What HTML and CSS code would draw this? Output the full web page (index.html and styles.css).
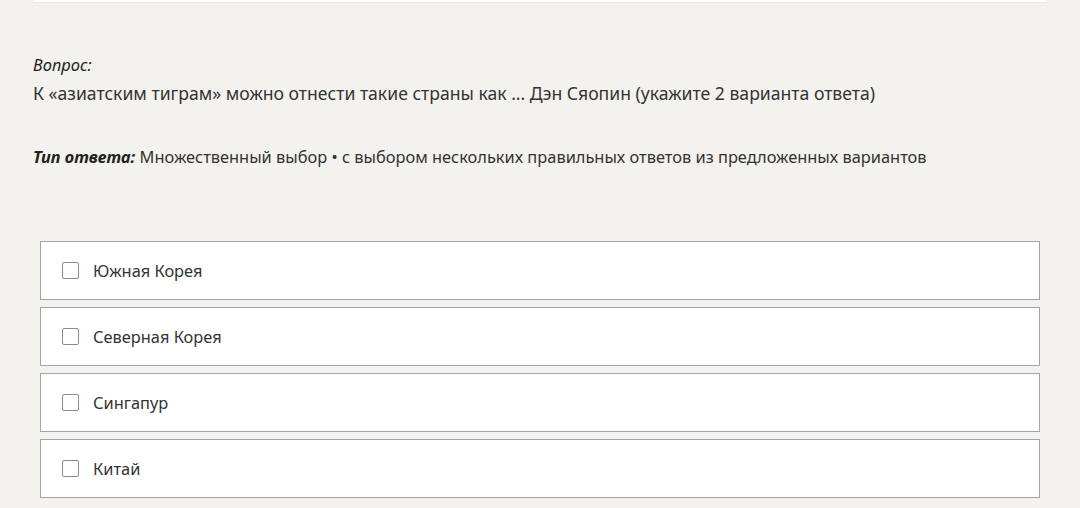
FILE: index.html
```html
<!DOCTYPE html>
<html lang="ru">
<head>
<meta charset="UTF-8" />
<meta name="viewport" content="width=device-width, initial-scale=1" />
<title>Вопрос</title>
<link rel="stylesheet" href="styles.css">
</head>
<body>

<div class="page">
  <div class="top-card"></div>

  <div class="question">
    <div class="label">Вопрос:</div>
    <div class="text">К «азиатским тиграм» можно отнести такие страны как ... Дэн Сяопин (укажите 2 варианта ответа)</div>
  </div>

  <div class="answer-type">
    <span class="label-bold">Тип ответа:</span> Множественный выбор • с выбором нескольких правильных ответов из предложенных вариантов
  </div>

  <div class="options">
    <label class="option"><span class="box"></span>Южная Корея</label>
    <label class="option"><span class="box"></span>Северная Корея</label>
    <label class="option"><span class="box"></span>Сингапур</label>
    <label class="option"><span class="box"></span>Китай</label>
  </div>
</div>

</body>
</html>
```

FILE: styles.css
```css
* {
  margin: 0; padding: 0; box-sizing: border-box;
}
body {
  background: #f3f2ee;
  color: #333;
  font-family: 'Noto Sans', 'Open Sans', sans-serif;
}
.page {
  padding: 0 33px;
}
.top-card {
  height: 3px;
  background: #fff;
  border-bottom: 1px solid #ecebe4;
}
.question {
  margin-top: 50px;
}
.label {
  font-style: italic;
  font-size: 16.5px;
  line-height: 24px;
  color: #222;
}
.text {
  font-size: 17.6px;
  line-height: 26px;
  margin-top: 3px;
}
.answer-type {
  margin-top: 39px;
  font-size: 16.4px;
  line-height: 24px;
}
.label-bold {
  font-weight: 700;
  font-style: italic;
  color: #222;
}
.options {
  margin: 72px 7px 0;
  display: flex;
  flex-direction: column;
  gap: 7px;
}
.option {
  display: flex;
  align-items: center;
  height: 59px;
  background: #fff;
  border: 1px solid #a4a4a4;
  padding-left: 21px;
  font-size: 16.4px;
  color: #333;
}
.box {
  width: 17px;
  height: 17px;
  border: 1px solid #8a8a8a;
  border-radius: 2px;
  margin-right: 14px;
  background: #fff;
}
```
